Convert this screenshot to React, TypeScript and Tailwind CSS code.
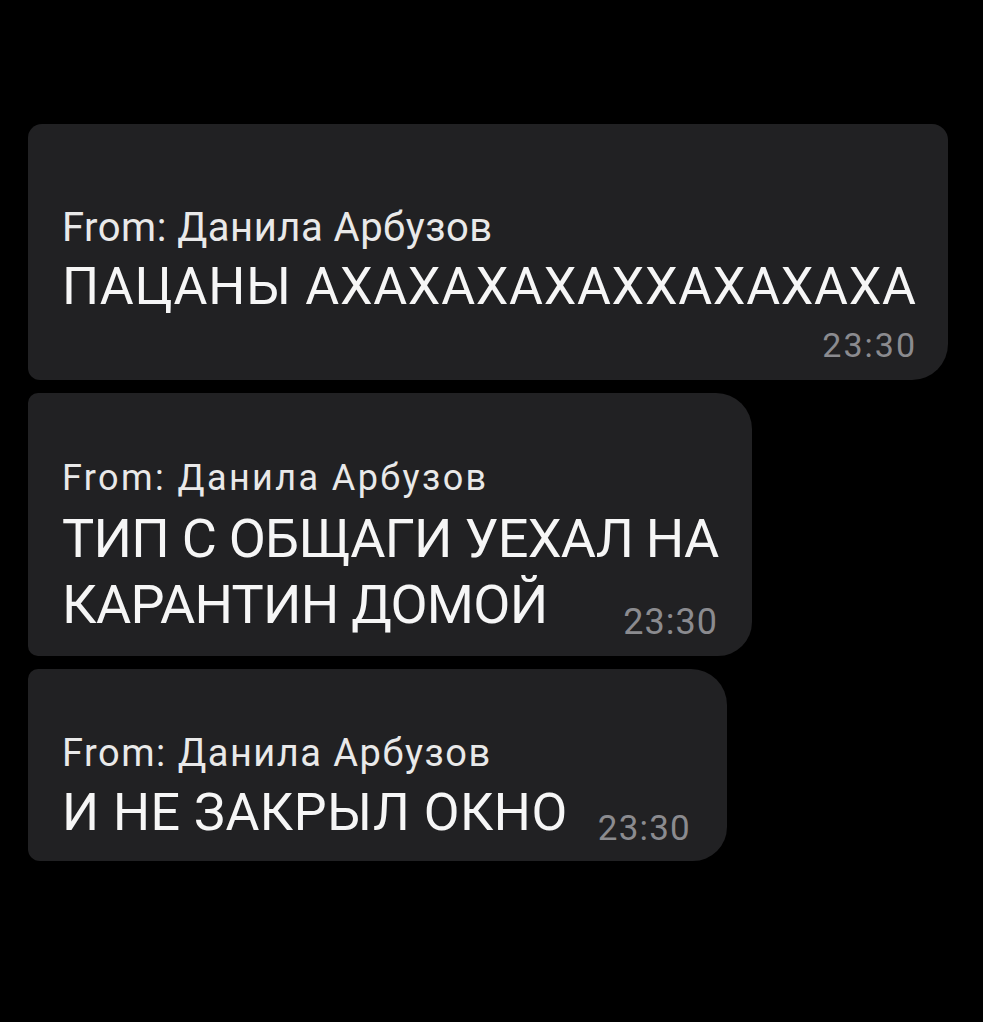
const SENDER = "From: Данила Арбузов";
const TIME = "23:30";

export default function App() {
  return (
    <div className="min-h-[1022px] w-full bg-black font-['Roboto','Liberation_Sans',sans-serif]">
      <div className="flex flex-col gap-[13px] pl-[28px] pt-[124px]">
        {/* first message: time sits on its own row */}
        <section className="flex h-[256px] w-[920px] flex-col rounded-tl-[14px] rounded-tr-[16px] rounded-br-[36px] rounded-bl-[12px] bg-[#212123] pl-[34px] pr-[31px] pt-[82px]">
          <p className="text-[40px] leading-[44px] tracking-[0.5px] text-[#e9e9e9]">{SENDER}</p>
          <p className="mt-[9px] whitespace-nowrap text-[52px] leading-[56px] tracking-[0.7px] text-[#f6f6f6]">
            ПАЦАНЫ АХАХАХАХАХХАХАХАХА
          </p>
          <div className="mt-[12px] flex justify-end">
            <span className="text-[34px] leading-[36px] tracking-[2px] text-[#8b8b8f]">{TIME}</span>
          </div>
        </section>

        <section className="flex h-[263px] w-[724px] flex-col rounded-tl-[10px] rounded-tr-[36px] rounded-br-[34px] rounded-bl-[10px] bg-[#212123] pl-[34px] pr-[34px] pt-[65px]">
          <p className="text-[36px] leading-[40px] tracking-[2.4px] text-[#e9e9e9]">{SENDER}</p>
          <p className="mt-[8px] whitespace-nowrap text-[54px] leading-[66px] tracking-[-0.75px] text-[#f6f6f6]">
            ТИП С ОБЩАГИ УЕХАЛ НА
          </p>
          <div className="flex items-end justify-between">
            <p className="whitespace-nowrap text-[54px] leading-[66px] tracking-[-0.75px] text-[#f6f6f6]">
              КАРАНТИН ДОМОЙ
            </p>
            <span className="text-[36px] leading-[32px] tracking-[1px] text-[#8b8b8f]">{TIME}</span>
          </div>
        </section>

        <section className="flex h-[192px] w-[699px] flex-col rounded-tl-[10px] rounded-tr-[36px] rounded-br-[34px] rounded-bl-[12px] bg-[#212123] pl-[34px] pr-[36px] pt-[62px]">
          <p className="text-[38px] leading-[44px] tracking-[1.5px] text-[#e9e9e9]">{SENDER}</p>
          <div className="mt-[10px] flex items-end justify-between">
            <p className="whitespace-nowrap text-[52px] leading-[56px] tracking-[0.5px] text-[#f6f6f6]">
              И НЕ ЗАКРЫЛ ОКНО
            </p>
            <span className="text-[35px] leading-[24px] tracking-[1.2px] text-[#8b8b8f]">{TIME}</span>
          </div>
        </section>
      </div>
    </div>
  );
}
